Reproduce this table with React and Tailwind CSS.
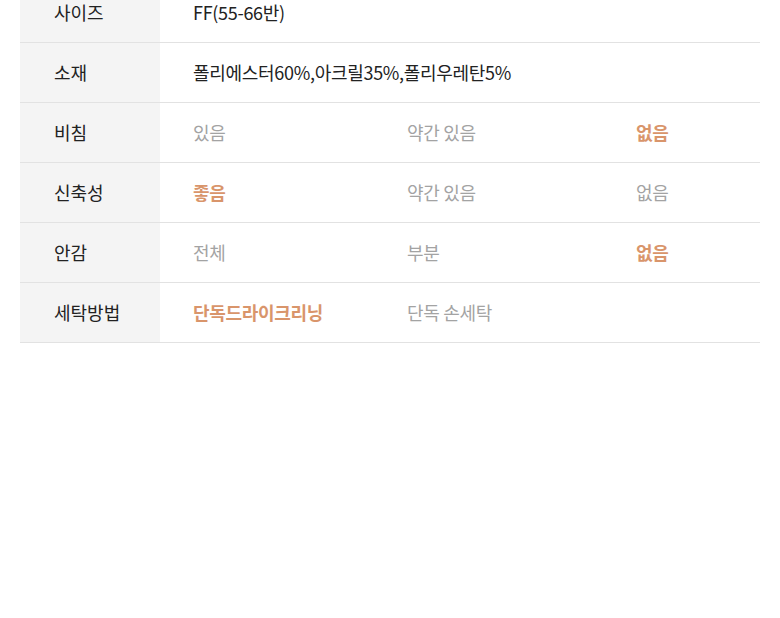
const rows = [
  { label: "사이즈", values: [{ text: "FF(55-66반)", tone: "dark" }] },
  {
    label: "소재",
    values: [{ text: "폴리에스터60%,아크릴35%,폴리우레탄5%", tone: "dark" }],
  },
  {
    label: "비침",
    values: [
      { text: "있음", tone: "muted" },
      { text: "약간 있음", tone: "muted" },
      { text: "없음", tone: "active" },
    ],
  },
  {
    label: "신축성",
    values: [
      { text: "좋음", tone: "active" },
      { text: "약간 있음", tone: "muted" },
      { text: "없음", tone: "muted" },
    ],
  },
  {
    label: "안감",
    values: [
      { text: "전체", tone: "muted" },
      { text: "부분", tone: "muted" },
      { text: "없음", tone: "active" },
    ],
  },
  {
    label: "세탁방법",
    values: [
      { text: "단독드라이크리닝", tone: "active" },
      { text: "단독 손세탁", tone: "muted" },
    ],
  },
];

const toneClass = {
  dark: "text-[#222222]",
  muted: "text-[#a3a3a3]",
  active: "text-[#d9956b] font-semibold",
};

const colWidth = ["w-[214px]", "w-[229px]", ""];

export default function App() {
  return (
    <div
      className="w-full h-[618px] bg-white overflow-hidden"
      style={{ fontFamily: '"Noto Sans CJK KR", "Noto Sans", sans-serif' }}
    >
      <div className="mx-5 -mt-[17px]">
        {rows.map((row) => (
          <div
            key={row.label}
            className="flex h-[60px] border-b border-[#e2e2e2]"
          >
            <div className="w-[140px] shrink-0 bg-[#f4f4f4] flex items-center pl-[34px] text-[18px] text-[#222222]">
              {row.label}
            </div>
            <div className="flex-1 flex items-center pl-[33px] text-[18px] tracking-[-0.3px]">
              {row.values.map((v, i) => (
                <div
                  key={i}
                  className={`shrink-0 whitespace-nowrap ${
                    row.values.length > 1 ? colWidth[i] : ""
                  } ${toneClass[v.tone]}`}
                >
                  {v.text}
                </div>
              ))}
            </div>
          </div>
        ))}
      </div>
    </div>
  );
}
